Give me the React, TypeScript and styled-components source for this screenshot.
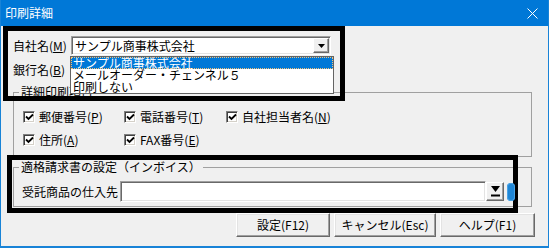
import React from 'react';
import styled, { createGlobalStyle } from 'styled-components';

const Global = createGlobalStyle`
  html, body { margin: 0; padding: 0; background: #ffffff; }
  body { font-family: "Noto Sans CJK JP", "Noto Sans", sans-serif; font-size: 12px; color: #000; }
  * { box-sizing: border-box; }
`;

const Window = styled.div`
  width: 549px;
  height: 248px;
  display: flex;
  flex-direction: column;
  background: #f0f0f0;
  border: 1px solid #1883d7;
  border-top: none;
  border-bottom-width: 2px;
  overflow: hidden;
`;

const TitleBar = styled.div`
  height: 26px;
  flex: none;
  background: #0078d7;
  color: #fff;
  display: flex;
  align-items: center;
  justify-content: space-between;
  padding: 0 10px 0 4px;
  font-size: 12px;
  line-height: 14px;
`;

const Body = styled.div`
  position: relative;
  flex: 1;
  display: flex;
  flex-direction: column;
  padding: 0 12px;
`;

const FieldRow = styled.div<{ $mt: number }>`
  display: flex;
  align-items: center;
  height: 19px;
  margin-top: ${p => p.$mt}px;
`;

const Label = styled.span<{ $w: number; $ml?: number }>`
  width: ${p => p.$w}px;
  margin-left: ${p => p.$ml ?? 0}px;
  flex: none;
  line-height: 14px;
  white-space: nowrap;
`;

const Combo = styled.div`
  position: relative;
  width: 260px;
  height: 19px;
  display: flex;
  align-items: stretch;
  background: #fff;
  border: 1px solid;
  border-color: #a0a0a0 #fff #fff #a0a0a0;
  box-shadow: inset 1px 1px 0 #696969, inset -1px -1px 0 #e3e3e3;
  padding: 1px;
`;

const ComboText = styled.span`
  flex: 1;
  padding-left: 2px;
  line-height: 15px;
  white-space: nowrap;
  overflow: hidden;
`;

const DropButton = styled.span<{ $w: number }>`
  width: ${p => p.$w}px;
  flex: none;
  display: flex;
  align-items: center;
  justify-content: center;
  background: #f0f0f0;
  border: 1px solid;
  border-color: #fff #696969 #696969 #fff;
  box-shadow: inset -1px -1px 0 #a0a0a0;
`;

const DropList = styled.div`
  position: absolute;
  top: 19px;
  left: -2px;
  width: 264px;
  background: #fff;
  border: 1px solid #646464;
  z-index: 4;
`;

const ListItem = styled.div<{ $selected?: boolean }>`
  height: 12px;
  line-height: 12px;
  padding-left: 2px;
  white-space: nowrap;
  background: ${p => (p.$selected ? '#0078d7' : 'transparent')};
  color: ${p => (p.$selected ? '#fff' : '#000')};
  outline: ${p => (p.$selected ? '1px dotted #f3c27a' : 'none')};
  outline-offset: -1px;
`;

const Group = styled.fieldset<{ $mt: number; $pt: number; $pb: number }>`
  margin: ${p => p.$mt}px 4px 0 0;
  padding: ${p => p.$pt}px 5px ${p => p.$pb}px;
  border: 1px solid #a0a0a0;
  min-width: 0;
`;

const Legend = styled.legend`
  padding: 0 2px;
  font-size: 12px;
  line-height: 14px;
`;

const CheckGrid = styled.div`
  display: grid;
  grid-template-columns: 101px 102px auto;
  row-gap: 7px;
  padding-left: 4px;
`;

const CheckItem = styled.label`
  display: flex;
  align-items: center;
  gap: 4px;
  height: 16px;
  line-height: 14px;
  white-space: nowrap;
`;

const Box = styled.span`
  width: 12px;
  height: 12px;
  flex: none;
  background: #fff;
  border: 1px solid;
  border-color: #808080 #fff #fff #808080;
  box-shadow: inset 1px 1px 0 #404040, inset -1px -1px 0 #d4d0c8;
  display: flex;
  align-items: center;
  justify-content: center;
`;

const InputRow = styled.div`
  display: flex;
  align-items: center;
  height: 21px;
  padding-left: 3px;
`;

const TextInput = styled.div`
  width: 366px;
  height: 21px;
  background: #fff;
  border: 1px solid;
  border-color: #a0a0a0 #fff #fff #a0a0a0;
  box-shadow: inset 1px 1px 0 #696969, inset -1px -1px 0 #e3e3e3;
`;

const SideButton = styled.span`
  width: 18px;
  height: 19px;
  flex: none;
  display: flex;
  align-items: center;
  justify-content: center;
  background: #f0f0f0;
  border: 1px solid;
  border-color: #fff #696969 #696969 #fff;
  box-shadow: inset -1px -1px 0 #a0a0a0;
`;

const Pill = styled.span`
  width: 8px;
  height: 18px;
  margin-left: 3px;
  flex: none;
  border-radius: 4px;
  background: #1f86d6;
  box-shadow: inset 0 0 0 1px #4aa3e6;
  position: relative;
  z-index: 6;
`;

const ButtonRow = styled.div`
  display: flex;
  justify-content: flex-end;
  gap: 4px;
  margin-top: 6px;
  padding-right: 1px;
`;

const Button = styled.button<{ $w: number }>`
  width: ${p => p.$w}px;
  height: 24px;
  padding: 0;
  font-family: inherit;
  font-size: 12px;
  line-height: 14px;
  color: #000;
  background: #f0f0f0;
  border: 1px solid;
  border-color: #fff #696969 #696969 #fff;
  box-shadow: inset -1px -1px 0 #a0a0a0, inset 1px 1px 0 #e3e3e3;
`;

const Highlight = styled.div<{ $l: number; $t: number; $w: number; $h: number }>`
  position: absolute;
  left: ${p => p.$l}px;
  top: ${p => p.$t}px;
  width: ${p => p.$w}px;
  height: ${p => p.$h}px;
  border: 5px solid #000;
  pointer-events: none;
  z-index: 5;
`;

const Check = () => (
  <svg width="9" height="8" viewBox="0 0 9 8">
    <path d="M1 3.5 L3.5 6 L8 1.5" fill="none" stroke="#000" strokeWidth="1.8" />
  </svg>
);

const SmallArrow = () => (
  <svg width="7" height="4" viewBox="0 0 7 4">
    <polygon points="0,0 7,0 3.5,4" fill="#000" />
  </svg>
);

const BarArrow = () => (
  <svg width="9" height="11" viewBox="0 0 9 11">
    <polygon points="0,0 9,0 4.5,6" fill="#000" />
    <rect x="0" y="8.5" width="9" height="2" fill="#000" />
  </svg>
);

const CloseIcon = () => (
  <svg width="11" height="11" viewBox="0 0 11 11">
    <path d="M0.5 0.5 L10.5 10.5 M10.5 0.5 L0.5 10.5" stroke="#fff" strokeWidth="1" />
  </svg>
);

const checks: { label: string; key: string }[] = [
  { label: '郵便番号', key: 'P' },
  { label: '電話番号', key: 'T' },
  { label: '自社担当者名', key: 'N' },
  { label: '住所', key: 'A' },
  { label: 'FAX番号', key: 'E' },
];

export default function App() {
  return (
    <>
      <Global />
      <Window>
        <TitleBar>
          <span>印刷詳細</span>
          <CloseIcon />
        </TitleBar>
        <Body>
          <FieldRow $mt={10}>
            <Label $w={58}>自社名(<u>M</u>)</Label>
            <Combo>
              <ComboText>サンプル商事株式会社</ComboText>
              <DropButton $w={16}><SmallArrow /></DropButton>
              <DropList>
                <ListItem $selected>サンプル商事株式会社</ListItem>
                <ListItem>メールオーダー・チェンネル５</ListItem>
                <ListItem>印刷しない</ListItem>
              </DropList>
            </Combo>
          </FieldRow>
          <FieldRow $mt={5}>
            <Label $w={58}>銀行名(<u>B</u>)</Label>
            <Combo>
              <ComboText />
              <DropButton $w={16}><SmallArrow /></DropButton>
            </Combo>
          </FieldRow>

          <Group $mt={6} $pt={10} $pb={8}>
            <Legend>詳細印刷項目</Legend>
            <CheckGrid>
              {checks.map(c => (
                <CheckItem key={c.key}>
                  <Box><Check /></Box>
                  <span>{c.label}(<u>{c.key}</u>)</span>
                </CheckItem>
              ))}
            </CheckGrid>
          </Group>

          <Group $mt={3} $pt={7} $pb={4}>
            <Legend>適格請求書の設定（インボイス）</Legend>
            <InputRow>
              <Label $w={98}>受託商品の仕入先</Label>
              <TextInput />
              <SideButton><BarArrow /></SideButton>
              <Pill />
            </InputRow>
          </Group>

          <ButtonRow>
            <Button $w={94}>設定(F12)</Button>
            <Button $w={102}>キャンセル(Esc)</Button>
            <Button $w={95}>ヘルプ(F1)</Button>
          </ButtonRow>

          <Highlight $l={2} $t={0} $w={342} $h={75} />
          <Highlight $l={6} $t={129} $w={511} $h={58} />
        </Body>
      </Window>
    </>
  );
}
